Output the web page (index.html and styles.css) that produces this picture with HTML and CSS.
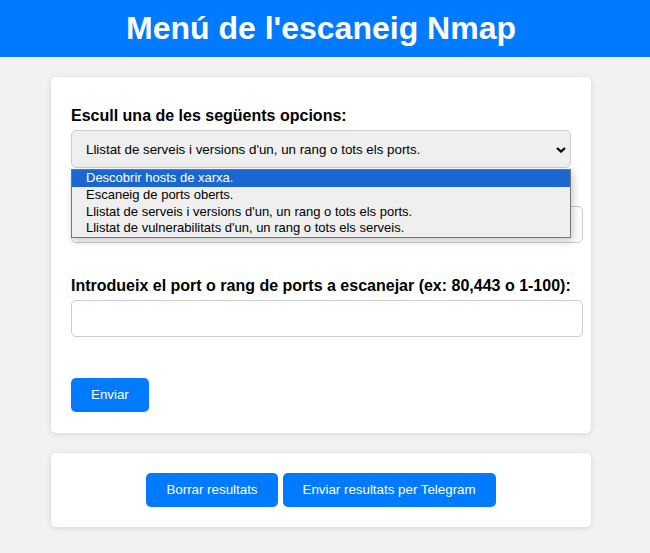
FILE: index.html
```html
<!DOCTYPE html>
<html lang="ca">
<head>
<meta charset="utf-8">
<title>Menú de l'escaneig Nmap</title>
<link rel="stylesheet" href="styles.css">
</head>
<body>
<header class="topbar">
  <h1 class="title">Menú de l'escaneig Nmap</h1>
</header>
<main class="container">
  <section class="card form-card">
    <label class="label first">Escull una de les següents opcions:</label>
    <div class="select-wrap">
      <div class="select">
        <span class="select-text">Llistat de serveis i versions d'un, un rang o tots els ports.</span>
        <svg class="chevron" width="10" height="6" viewBox="0 0 10 6"><path d="M1 1 L5 4.6 L9 1" fill="none" stroke="#000" stroke-width="2.2" stroke-linejoin="miter"/></svg>
      </div>
      <ul class="dropdown">
        <li class="opt active">Descobrir hosts de xarxa.</li>
        <li class="opt">Escaneig de ports oberts.</li>
        <li class="opt">Llistat de serveis i versions d'un, un rang o tots els ports.</li>
        <li class="opt">Llistat de vulnerabilitats d'un, un rang o tots els serveis.</li>
      </ul>
    </div>
    <div class="input input-target"></div>
    <label class="label second">Introdueix el port o rang de ports a escanejar (ex: 80,443 o 1-100):</label>
    <div class="input"></div>
    <button class="btn send">Enviar</button>
  </section>
  <section class="card actions">
    <button class="btn">Borrar resultats</button>
    <button class="btn">Enviar resultats per Telegram</button>
  </section>
</main>
</body>
</html>
```
FILE: styles.css
```css
* { box-sizing: border-box; }
html, body { margin: 0; padding: 0; }
body {
  background: #f2f2f2;
  font-family: "Liberation Sans", Arial, sans-serif;
  color: #000;
}
.topbar {
  background: #007bff;
  color: #fff;
  padding: 10px 8px 10px 0;
  text-align: center;
}
.title {
  margin: 0;
  font-size: 32px;
  line-height: 37px;
  font-weight: bold;
}
.container {
  width: 540px;
  margin: 20px 0 0 51px;
}
.card {
  background: #fff;
  border-radius: 5px;
  padding: 20px;
  box-shadow: 0 1px 6px rgba(0, 0, 0, 0.12);
  margin-bottom: 20px;
}
.form-card { padding-bottom: 21px; }
.label {
  display: block;
  font-size: 16px;
  font-weight: bold;
  line-height: 18px;
  margin: 0 0 5px;
}
.label.first { margin-top: 10px; }
.label.second { margin-top: 34px; }
.select-wrap { position: relative; }
.select {
  height: 38px;
  width: 500px;
  border: 1px solid #cfcfcf;
  border-radius: 5px;
  background: #efefef;
  display: flex;
  align-items: center;
  padding: 0 4px 0 14px;
  font-size: 13.33px;
}
.select-text { flex: 1; }
.chevron { display: block; margin-top: 1px; }
.dropdown {
  position: absolute;
  top: calc(100% + 1px);
  left: 0;
  width: 500px;
  margin: 0;
  padding: 0;
  list-style: none;
  background: #efefef;
  border: 1px solid #767676;
  box-shadow: 2px 3px 8px rgba(0, 0, 0, 0.22);
  z-index: 2;
}
.opt {
  font-size: 13px;
  line-height: 16.75px;
  height: 16.75px;
  padding-left: 14px;
  color: #000;
}
.opt.active {
  background: #1a67d2;
  color: #fff;
}
.input {
  width: 512px;
  height: 37px;
  border: 1px solid #ccc;
  border-radius: 5px;
  background: #fff;
}
.input-target { margin-top: 38px; }
.btn {
  font-family: "Liberation Sans", Arial, sans-serif;
  font-size: 13.33px;
  line-height: 14px;
  padding: 10px 20px;
  background: #007bff;
  color: #fff;
  border: none;
  border-radius: 5px;
  display: block;
}
.btn.send { margin-top: 41px; }
.actions {
  display: flex;
  justify-content: center;
  gap: 5px;
}
```
